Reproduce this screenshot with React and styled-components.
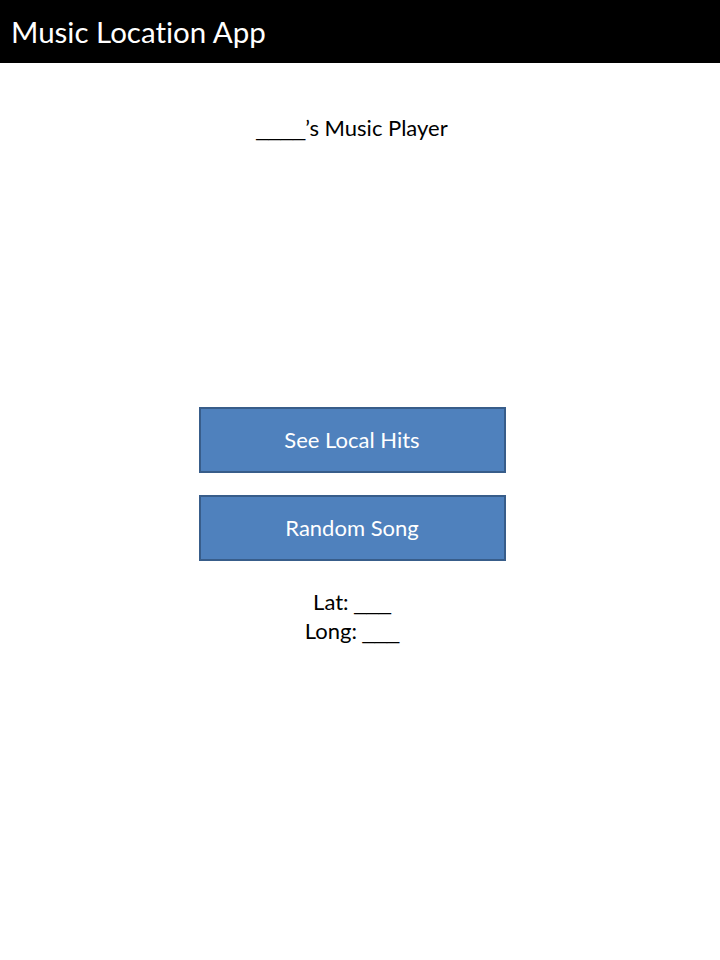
import React from 'react';
import styled, { createGlobalStyle } from 'styled-components';

const GlobalStyle = createGlobalStyle`
    html, body {
        margin: 0;
        padding: 0;
        background: #ffffff;
        font-family: Lato, "Open Sans", "Liberation Sans", sans-serif;
        font-variant-ligatures: none;
    }
`;

const App = () => {
    return (
        <>
            <GlobalStyle />
            <Page>
                <TopBar>
                    <AppTitle>Music Location App</AppTitle>
                </TopBar>
                <Main>
                    <PlayerTitle><Blank>____</Blank>’s Music Player</PlayerTitle>
                    <ButtonGroup>
                        <ActionBtn>See Local Hits</ActionBtn>
                        <ActionBtn>Random Song</ActionBtn>
                    </ButtonGroup>
                    <Coords>
                        <p>Lat: <Blank>___</Blank></p>
                        <p>Long: <Blank>___</Blank></p>
                    </Coords>
                </Main>
            </Page>
        </>
    );
};

export default App;

const Page = styled.div`
    width: 720px;
    min-height: 960px;
    display: flex;
    flex-direction: column;
`;

const TopBar = styled.header`
    height: 63px;
    background: #000000;
    display: flex;
    align-items: center;
    padding: 0 11px;
`;

const AppTitle = styled.h1`
    margin: 0;
    color: #ffffff;
    font-size: 29.5px;
    font-weight: 400;
    line-height: 1;
`;

const Main = styled.main`
    display: flex;
    flex-direction: column;
    align-items: center;
    padding: 51px 16px 0 0;
`;

const Blank = styled.span`
    font-family: "Liberation Sans", sans-serif;
`;

const PlayerTitle = styled.h2`
    margin: 0;
    font-size: 22px;
    font-weight: 400;
    line-height: 28px;
    color: #000000;
`;

const ButtonGroup = styled.div`
    display: flex;
    flex-direction: column;
    gap: 22px;
    margin-top: 264px;
`;

const ActionBtn = styled.button`
    width: 307px;
    height: 66px;
    background-color: #4f81bd;
    border: 2.5px solid #385d8a;
    color: #ffffff;
    font-family: inherit;
    font-size: 22px;
    padding: 0 0 2px;
    cursor: pointer;
    outline: 0;
`;

const Coords = styled.div`
    margin-top: 27px;
    text-align: center;
    font-size: 22px;
    line-height: 28px;

    p {
        margin: 0;
    }
`;
